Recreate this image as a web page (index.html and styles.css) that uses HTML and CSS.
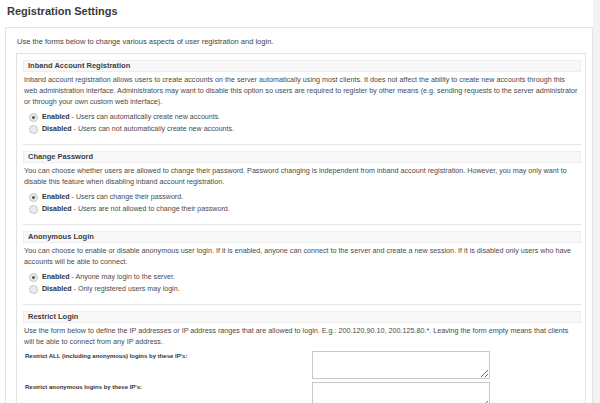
FILE: index.html
```html
<!DOCTYPE html>
<html>
<head>
<meta charset="utf-8">
<link rel="stylesheet" href="styles.css">
</head>
<body>
<div class="page">
  <h1 class="title">Registration Settings</h1>
  <div class="panel">
    <p class="intro">Use the forms below to change various aspects of user registration and login.</p>
    <div class="wrap">
      <div class="section">
        <div class="sec-head">Inband Account Registration</div>
        <p class="desc">Inband account registration allows users to create accounts on the server automatically using most clients. It does not affect the ability to create new accounts through this web administration interface. Administrators may want to disable this option so users are required to register by other means (e.g. sending requests to the server administrator or through your own custom web interface).</p>
        <div class="options">
          <div class="opt"><span class="radio on"></span><b>Enabled</b>&nbsp;- Users can automatically create new accounts.</div>
          <div class="opt"><span class="radio"></span><b>Disabled</b>&nbsp;- Users can not automatically create new accounts.</div>
        </div>
      </div>
      <div class="section">
        <div class="sec-head">Change Password</div>
        <p class="desc">You can choose whether users are allowed to change their password. Password changing is independent from inband account registration. However, you may only want to disable this feature when disabling inband account registration.</p>
        <div class="options">
          <div class="opt"><span class="radio on"></span><b>Enabled</b>&nbsp;- Users can change their password.</div>
          <div class="opt"><span class="radio"></span><b>Disabled</b>&nbsp;- Users are not allowed to change their password.</div>
        </div>
      </div>
      <div class="section">
        <div class="sec-head">Anonymous Login</div>
        <p class="desc">You can choose to enable or disable anonymous user login. If it is enabled, anyone can connect to the server and create a new session. If it is disabled only users who have accounts will be able to connect.</p>
        <div class="options">
          <div class="opt"><span class="radio on"></span><b>Enabled</b>&nbsp;- Anyone may login to the server.</div>
          <div class="opt"><span class="radio"></span><b>Disabled</b>&nbsp;- Only registered users may login.</div>
        </div>
      </div>
      <div class="section last">
        <div class="sec-head">Restrict Login</div>
        <p class="desc">Use the form below to define the IP addresses or IP address ranges that are allowed to login. E.g.: 200.120.90.10, 200.125.80.*. Leaving the form empty means that clients will be able to connect from any IP address.</p>
        <div class="ip-grid">
          <label class="ip-label">Restrict ALL (including anonymous) logins by these IP's:</label>
          <textarea class="ip-box"></textarea>
          <label class="ip-label">Restrict anonymous logins by these IP's:</label>
          <textarea class="ip-box"></textarea>
        </div>
      </div>
    </div>
  </div>
</div>
</body>
</html>
```

FILE: styles.css
```css
html, body {
  margin: 0;
  padding: 0;
  background: #ffffff;
  overflow: hidden;
}
body {
  font-family: "Liberation Sans", Arial, sans-serif;
  color: #444;
  font-size: 7.5px;
}
.page {
  width: 600px;
  height: 403px;
  overflow: hidden;
  background: linear-gradient(to right, #fff 0, #fff 593px, #f2f2f2 593px);
}
.title {
  margin: 0;
  padding: 5px 0 0 7px;
  height: 17px;
  font-size: 11px;
  font-weight: bold;
  color: #3a3a3a;
}
.panel {
  margin: 5px 7px 0 5px;
  border: 1px solid #e4e4e4;
  border-bottom: none;
  background: #fff;
  padding: 0 6px 0 10px;
  height: 400px;
  box-sizing: border-box;
}
.intro {
  margin: 0;
  padding: 9px 0 0 1px;
  height: 16px;
  color: #444;
}
.wrap {
  border: 1px solid #e2e2e2;
  border-bottom: none;
  padding: 0 4px 0 6px;
}
.section {
  padding: 6px 0 9px 0;
  border-bottom: 1px solid #e6e6e6;
}
.sec-head {
  background: #f8f8f8;
  border: 1px solid #eeeeee;
  height: 10px;
  line-height: 10px;
  padding: 0 4px;
  font-weight: bold;
  color: #3c3c3c;
}
.desc {
  margin: 2px 2px 0 1px;
  line-height: 11px;
  font-size: 7.2px;
  color: #4a4a4a;
}
.options {
  margin: 4px 0 0 6px;
  font-size: 7.1px;
}
.opt {
  display: flex;
  align-items: center;
  height: 12px;
  color: #4a4a4a;
}
.opt b {
  color: #333;
}
.radio {
  width: 7px;
  height: 7px;
  border-radius: 50%;
  border: 1px solid #c4c4c4;
  background: #ececec;
  margin-right: 4px;
  display: flex;
  align-items: center;
  justify-content: center;
  flex: none;
}
.radio.on::after {
  content: "";
  width: 3px;
  height: 3px;
  border-radius: 50%;
  background: #555;
}
.ip-grid {
  display: grid;
  grid-template-columns: 289px 178px;
  row-gap: 3px;
  margin-top: 4px;
}
.ip-label {
  font-weight: bold;
  font-size: 6px;
  color: #333;
  padding: 2px 0 0 2px;
}
.ip-box {
  width: 178px;
  height: 28px;
  box-sizing: border-box;
  border: 1px solid #c8c8c8;
  margin: 0;
  padding: 0;
  resize: vertical;
  font-family: inherit;
}
```
